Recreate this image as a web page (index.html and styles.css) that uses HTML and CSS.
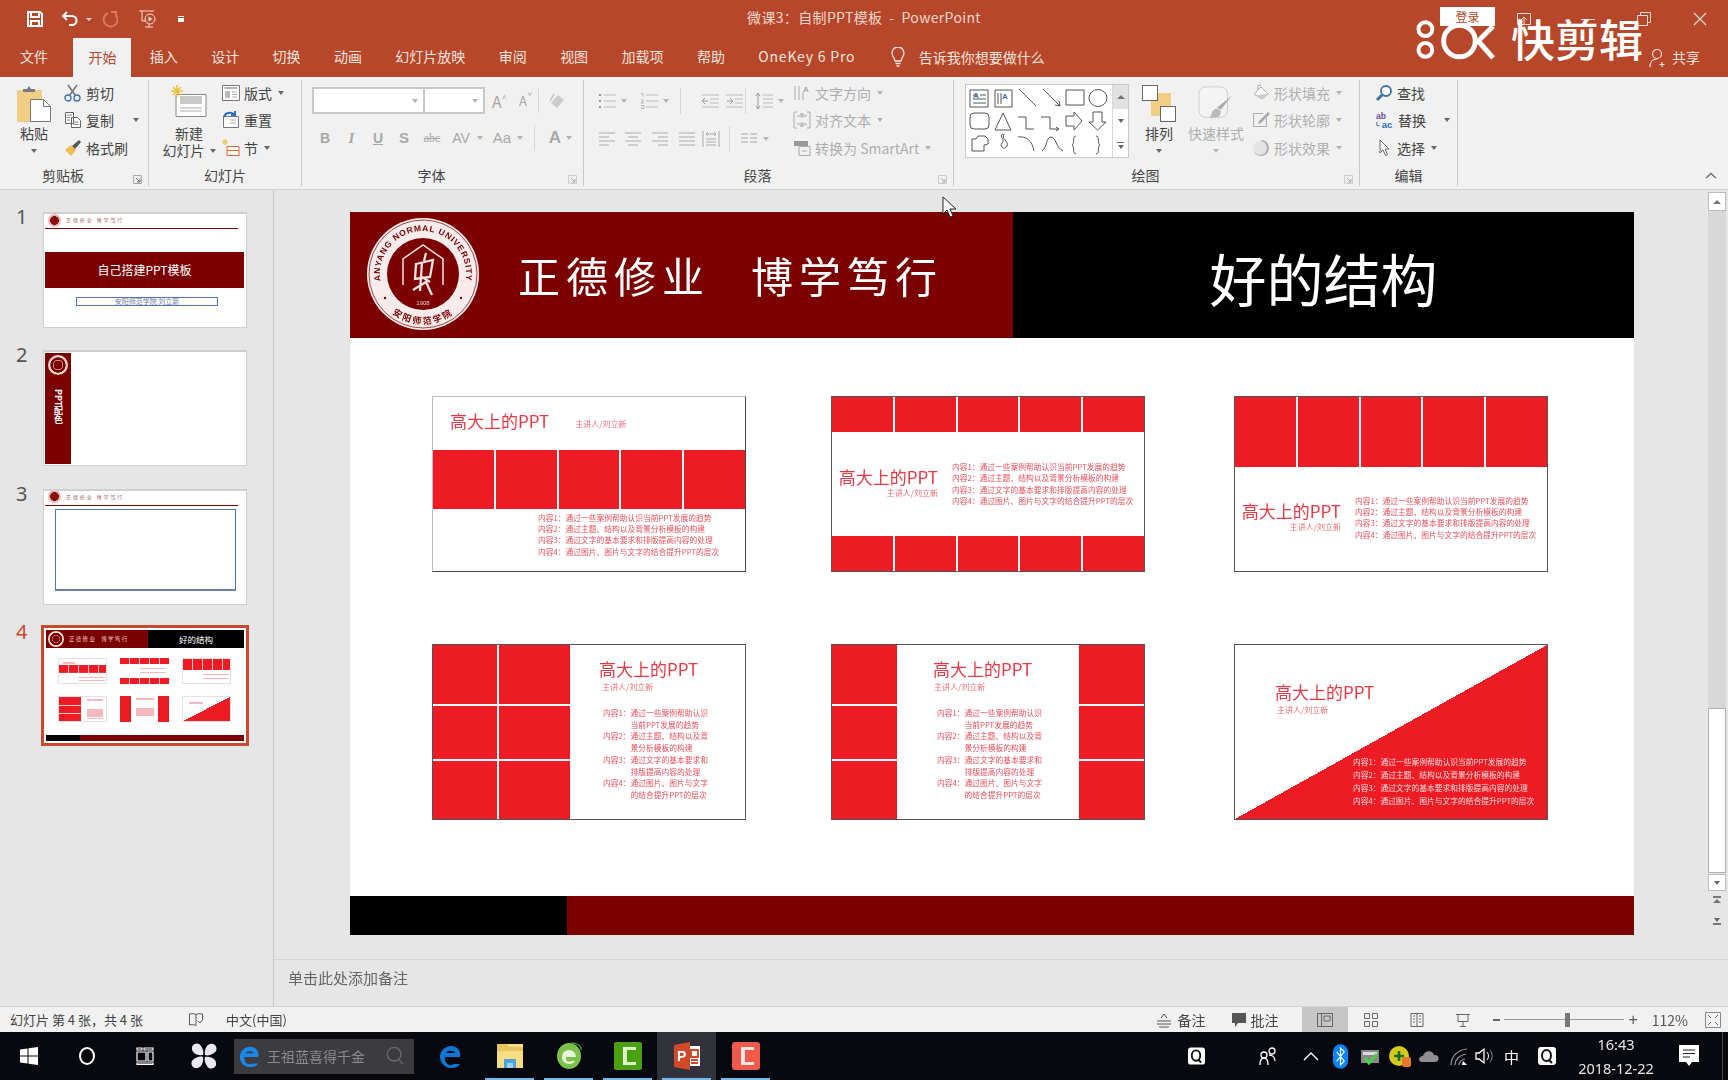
FILE: index.html
```html
<!DOCTYPE html>
<html lang="zh-CN">
<head>
<meta charset="utf-8">
<title>微课3：自制PPT模板 - PowerPoint</title>
<link rel="stylesheet" href="styles.css">
</head>
<body>
<div class="app">

<header class="titlebar">
  <div class="qat">
    <svg class="qi qsave" viewBox="0 0 18 18"><path d="M2 2h12l2 2v12H2z M5 2v5h8V2 M5 16v-5h8v5" fill="none" stroke="#fff" stroke-width="2"/></svg>
    <svg class="qi" viewBox="0 0 18 18"><path d="M6 2L2 6l4 4M2.500 6H11a4.500 4.500 0 0 1 0 9H8" fill="none" stroke="#fff" stroke-width="2"/></svg>
    <span class="qcaret"></span>
    <svg class="qi qdim" viewBox="0 0 18 18"><path d="M11 2h5v5M15 4a7 7 0 1 1-7-1" fill="none" stroke="#d9795e" stroke-width="2"/></svg>
    <svg class="qi qwide" viewBox="0 0 20 20"><path d="M1 2h15M4 2v10h4M7 18h8M11 15v3" fill="none" stroke="#f5ddd5" stroke-width="1"/><circle cx="12" cy="10" r="5" fill="none" stroke="#f5ddd5"/><path d="M10.500 7.500l4 2.500-4 2.500z" fill="#f5ddd5"/></svg>
    <span class="qmore"></span>
  </div>
  <div class="doc-title">微课3：自制PPT模板&nbsp; - &nbsp;PowerPoint</div>
  <div class="winctl">
    <svg class="wi" viewBox="0 0 14 14"><path d="M.5 1.500h13v11H.5zM4 8l3-3 3 3M7 5v7" fill="none" stroke="#f5ddd5"/></svg>
    <span class="wmin"></span>
    <svg class="wi" viewBox="0 0 14 14"><path d="M.5 3.500h10v10H.5zM3.500 3.500v-3h10v10h-3" fill="none" stroke="#f5ddd5"/></svg>
    <svg class="wi" viewBox="0 0 14 14"><path d="M1 1l12 12M13 1L1 13" fill="none" stroke="#f5ddd5" stroke-width="1.200"/></svg>
  </div>
</header>

<nav class="tabs">
  <span class="tab tab-file">文件</span>
  <span class="tab tab-on">开始</span>
  <span class="tab">插入</span>
  <span class="tab">设计</span>
  <span class="tab">切换</span>
  <span class="tab">动画</span>
  <span class="tab">幻灯片放映</span>
  <span class="tab">审阅</span>
  <span class="tab">视图</span>
  <span class="tab">加载项</span>
  <span class="tab">帮助</span>
  <span class="tab tab-latin">OneKey 6 Pro</span>
  <span class="tell">
    <svg class="bulb" viewBox="0 0 16 20"><path d="M5 14c0-3-3-4-3-8a6 6 0 0 1 12 0c0 4-3 5-3 8zM5.500 16.500h5M6.500 19h3" fill="none" stroke="#f6e5df" stroke-width="1.300"/></svg>
    告诉我你想要做什么
  </span>
  <span class="share">
    <svg class="shareic" viewBox="0 0 18 20"><circle cx="8" cy="6" r="4.500" fill="none" stroke="#f6e5df" stroke-width="1.200"/><path d="M1 19c0-5 3-8 7-8M13 14v5M10.500 16.500h5" fill="none" stroke="#f6e5df" stroke-width="1.200"/></svg>
    共享
  </span>
</nav>

<section class="ribbon">
  <div class="group g1">
    <div class="gbody">
      <div class="big paste">
        <svg class="ic-paste" viewBox="0 0 34 37"><rect y="5" width="25" height="32" fill="#f2cd84"/><path d="M6 7V4h4l2-3 2 3h4v3z" fill="#7a7a7a"/><path d="M13.500 14.500h13l7 7v15h-20z" fill="#fff" stroke="#777"/><path d="M26.500 14.500v7h7" fill="none" stroke="#777"/></svg>
        <span class="big-label">粘贴</span>
        <span class="caret caret-big"></span>
      </div>
      <div class="rows rows1">
        <div class="row">
          <svg class="ic" viewBox="0 0 18 18"><circle cx="4" cy="14" r="3" fill="none" stroke="#3d6fa8" stroke-width="1.300"/><circle cx="13" cy="14" r="3" fill="none" stroke="#3d6fa8" stroke-width="1.300"/><path d="M5.500 11.500L13 1M11.500 11.500L4 1" stroke="#777" stroke-width="1.600"/></svg>
          <span>剪切</span>
        </div>
        <div class="row">
          <svg class="ic" viewBox="0 0 18 18"><path d="M1.500 1.500h8v11h-8zM7.500 6.500h6l3 3v7h-9z" fill="#fff" stroke="#666"/><path d="M3 4h5M3 6.500h3M3 9h3M9.500 11h5M9.500 13.500h5" stroke="#888"/></svg>
          <span>复制</span><span class="caret caret-copy"></span>
        </div>
        <div class="row">
          <svg class="ic" viewBox="0 0 18 18"><path d="M1 11l6-5 5 5-5 6z" fill="#eebb55"/><path d="M8 7l7-6 2 2-6 7z" fill="#555"/></svg>
          <span>格式刷</span>
        </div>
      </div>
    </div>
    <div class="glabel launch">剪贴板<svg class="launcher" viewBox="0 0 9 9"><path d="M.5.500h8v8h-8z" fill="none" stroke="#aaa"/><path d="M3 3l4 4M7 4v3H4" fill="none" stroke="#666"/></svg></div>
  </div>

  <div class="group g2">
    <div class="gbody">
      <div class="big newslide">
        <svg class="ic-new" viewBox="0 0 36 32"><path d="M5 9.500h30v22H5z" fill="#fff" stroke="#888"/><rect x="9" y="11" width="22" height="8" fill="#c9c9c9"/><path d="M9 23h22M9 26h22" stroke="#aaa"/><path d="M6 0v12M0 6h12M2 2l8 8M10 2l-8 8" stroke="#f0c040" stroke-width="1.600"/></svg>
        <span class="big-label newlabel">新建</span>
        <span class="big-label">幻灯片<span class="caret caret-inline"></span></span>
      </div>
      <div class="rows rows2">
        <div class="row">
          <svg class="ic" viewBox="0 0 18 18"><path d="M.5 1.500h17v15H.5z" fill="#fff" stroke="#777"/><path d="M2.500 4h13" stroke="#999" stroke-width="1.500"/><rect x="3" y="7" width="5" height="7" fill="#bbb"/><path d="M10 8h5M10 10.500h5M10 13h5" stroke="#aaa"/></svg>
          <span>版式</span><span class="caret"></span>
        </div>
        <div class="row">
          <svg class="ic" viewBox="0 0 18 18"><path d="M1.500 5.500h15v11h-15z" fill="#fff" stroke="#777"/><path d="M8 9h6M8 12h6" stroke="#aaa"/><path d="M2 6a6 5 0 0 1 10-3l1 1M13 0v4H9" fill="none" stroke="#2a6fbf" stroke-width="2"/></svg>
          <span>重置</span>
        </div>
        <div class="row">
          <svg class="ic" viewBox="0 0 18 18"><path d="M5 7.500h12v4H5zM5 11.500h12v5H5z" fill="#fff" stroke="#d46a3a"/><path d="M3 0v6M0 3h6M1 1l4 4M5 1L1 5" stroke="#f0c040"/></svg>
          <span>节</span><span class="caret"></span>
        </div>
      </div>
    </div>
    <div class="glabel">幻灯片</div>
  </div>

  <div class="group g3">
    <div class="gbody col">
      <div class="font-row1">
        <span class="combo combo-font"><span class="caret caret-dim"></span></span>
        <span class="combo combo-size"><span class="caret caret-dim"></span></span>
        <span class="fsym fgrow">A<sup>^</sup></span>
        <span class="fsym fshrink">A<sup>ˇ</sup></span>
        <span class="vsep"></span>
        <svg class="ic eraser" viewBox="0 0 18 18"><path d="M3 11l7-8 6 5-7 8z" fill="#ccc"/><path d="M2 9l4-7" stroke="#bbb" stroke-width="1.500"/></svg>
      </div>
      <div class="font-row2">
        <span class="fb b">B</span><span class="fb i">I</span><span class="fb u">U</span><span class="fb s">S</span>
        <span class="fb abc">abc</span>
        <span class="fb av">AV</span><span class="caret caret-dim"></span>
        <span class="fb aa">Aa</span><span class="caret caret-dim"></span>
        <span class="vsep vsep-a"></span>
        <span class="fb ca">A</span><span class="caret caret-dim"></span>
      </div>
    </div>
    <div class="glabel launch">字体<svg class="launcher" viewBox="0 0 9 9"><path d="M.5.500h8v8h-8z" fill="none" stroke="#ccc"/><path d="M3 3l4 4M7 4v3H4" fill="none" stroke="#aaa"/></svg></div>
  </div>

  <div class="group g4">
    <div class="gbody">
      <div class="para-left">
        <div class="para-row1">
          <svg class="ic" viewBox="0 0 18 18"><path d="M6 3h12M6 9h12M6 15h12" stroke="#bbb"/><path d="M1 3h2M1 9h2M1 15h2" stroke="#999" stroke-width="2"/></svg>
          <span class="caret caret-dim cm"></span>
          <svg class="ic ml13" viewBox="0 0 18 18"><path d="M6 3h12M6 9h12M6 15h12" stroke="#bbb"/><path d="M1 1.500h2v3M1 8h2.500L1 11h3M1 13.500h3v3H1" fill="none" stroke="#aaa" stroke-width=".8"/></svg>
          <span class="caret caret-dim cm"></span>
          <span class="vsep vs1"></span>
          <svg class="ic" viewBox="0 0 18 18"><path d="M1 3h17M9 7h9M9 11h9M1 15h17" stroke="#bbb"/><path d="M7 9H1M4 6L1 9l3 3" fill="none" stroke="#999"/></svg>
          <svg class="ic ml7" viewBox="0 0 18 18"><path d="M0 3h17M9 7h8M9 11h8M0 15h17" stroke="#bbb"/><path d="M1 9h6M4 6l3 3-3 3" fill="none" stroke="#999"/></svg>
          <span class="vsep vs2"></span>
          <svg class="ic" viewBox="0 0 18 18"><path d="M8 3h10M8 7h10M8 11h10M8 15h10" stroke="#bbb"/><path d="M3 1v16M1 4l2-3 2 3M1 14l2 3 2-3" fill="none" stroke="#999"/></svg>
          <span class="caret caret-dim cm"></span>
        </div>
        <div class="para-row2">
          <svg class="ic" viewBox="0 0 18 18"><path d="M1 3h16M1 7h10M1 11h16M1 15h10" stroke="#aaa"/></svg>
          <svg class="ic ml8" viewBox="0 0 18 18"><path d="M1 3h16M4 7h10M1 11h16M4 15h10" stroke="#aaa"/></svg>
          <svg class="ic ml9" viewBox="0 0 18 18"><path d="M1 3h16M7 7h10M1 11h16M7 15h10" stroke="#aaa"/></svg>
          <svg class="ic ml9" viewBox="0 0 18 18"><path d="M1 3h16M1 7h16M1 11h16M1 15h16" stroke="#aaa"/></svg>
          <svg class="ic ml6" viewBox="0 0 18 18"><path d="M1 1v16M17 1v16M4 4h10M6 2L4 4l2 2M12 2l2 2-2 2M4 9h10M4 12h10M4 15h10" fill="none" stroke="#aaa"/></svg>
          <span class="vsep vs3"></span>
          <svg class="ic" viewBox="0 0 18 18"><path d="M1 4h7M10 4h7M1 8h7M10 8h7M1 12h7M10 12h7" stroke="#aaa"/></svg>
          <span class="caret caret-dim cm"></span>
        </div>
      </div>
      <div class="rows rows4 dim">
        <div class="row">
          <svg class="ic" viewBox="0 0 18 18"><path d="M2 2v14M6 2v14M10 8v8" stroke="#aaa"/><text x="10" y="8" class="svgA">A</text></svg>
          <span>文字方向</span><span class="caret caret-dim"></span>
        </div>
        <div class="row">
          <svg class="ic" viewBox="0 0 18 18"><path d="M4 1H1v16h3M14 1h3v16h-3M4 5h10M4 13h10M9 2v5M7 4l2-2 2 2M9 16v-5M7 14l2 2 2-2" fill="none" stroke="#aaa"/></svg>
          <span>对齐文本</span><span class="caret caret-dim"></span>
        </div>
        <div class="row">
          <svg class="ic" viewBox="0 0 18 18"><path d="M1 2h14v5H1z" fill="#999"/><path d="M6 7.500h11v9H6z" fill="#f1f1f1" stroke="#aaa"/><path d="M9 12h5" stroke="#aaa"/></svg>
          <span>转换为 SmartArt</span><span class="caret caret-dim"></span>
        </div>
      </div>
    </div>
    <div class="glabel launch">段落<svg class="launcher" viewBox="0 0 9 9"><path d="M.5.500h8v8h-8z" fill="none" stroke="#ccc"/><path d="M3 3l4 4M7 4v3H4" fill="none" stroke="#aaa"/></svg></div>
  </div>

  <div class="group g5">
    <div class="gbody">
      <div class="gallery">
        <svg class="shapes" viewBox="0 0 146 72">
          <g fill="none" stroke="#555">
            <path d="M4 5h18v17H4zM7 10h5M14 10h6M7 14h13M7 18h13"/>
            <path d="M29 5h17v17H29zM32 8v11M35 8v11"/>
            <path d="M53 4l17 17M77 4l17 17M94 21l-5-1M94 21l-1-5"/>
            <path d="M100 5h18v15h-18z"/><ellipse cx="132" cy="13" rx="9" ry="8.500"/>
            <rect x="4" y="28" width="19" height="16" rx="4"/>
            <path d="M37 28l-8 17h16zM52 32h8v12h8M75 32h9v12h9M93 44l-3-2M93 44l-3 2"/>
            <path d="M100 31h8v-4l8 9-8 9v-4h-8zM127 27h9v10h4l-8.500 8-8.500-8h4z"/>
            <path d="M6 66V54h4l2-3h7l3 3v5l-4 1v6zM37 49c-5 2 3 6-1 9 -3 3 3 8 5 3s-6-7-3-12M52 52c8-1 14 3 16 14M76 66c5-3 4-14 9-14s5 11 12 14M110 51c-4 0-1 8-4 9 3 1 0 9 4 9M130 51c4 0 1 8 4 9-3 1 0 9-4 9"/>
          </g>
          <g fill="#3a6fb0" font-family="Liberation Sans, sans-serif" font-size="8" font-weight="700">
            <text x="7" y="13">A</text><text x="36" y="14">A</text>
          </g>
        </svg>
        <div class="gal-scroll">
          <span class="gs gs-up"><span class="tri-up"></span></span>
          <span class="gs"><span class="caret caret-g"></span></span>
          <span class="gs gs-more"><span class="gmore"></span><span class="caret caret-g"></span></span>
        </div>
      </div>
      <div class="big arrange">
        <svg class="ic-arr" viewBox="0 0 34 37"><rect x="9" y="8" width="20" height="23" fill="#f2cd84"/><rect x=".5" y=".5" width="15" height="15" fill="#fff" stroke="#666"/><rect x="18.500" y="21.500" width="15" height="15" fill="#fff" stroke="#666"/></svg>
        <span class="big-label">排列</span>
        <span class="caret caret-big"></span>
      </div>
      <div class="big quick dim">
        <svg class="ic-arr" viewBox="0 0 38 37"><rect x="1" y="1" width="30" height="32" rx="7" fill="#f4f4f4" stroke="#ccc"/><path d="M36 10L24 25l-4-2z" fill="#aaa"/><path d="M19 24c5 0 6 4 4 7s-8 3-11 2c3-2 2-8 7-9z" fill="#bbb"/></svg>
        <span class="big-label">快速样式</span>
        <span class="caret caret-dim caret-big"></span>
      </div>
      <div class="rows rows5 dim">
        <div class="row">
          <svg class="ic" viewBox="0 0 18 18"><path d="M2 10l7-7 7 7-6 5z" fill="#fff" stroke="#aaa"/><path d="M4 11l6 4 6-5z" fill="#ccc"/><path d="M6 6V2l3-1" fill="none" stroke="#aaa"/></svg>
          <span>形状填充</span><span class="caret caret-dim"></span>
        </div>
        <div class="row">
          <svg class="ic" viewBox="0 0 18 18"><path d="M11 2.500H1.500v13h13V7" fill="none" stroke="#aaa"/><path d="M16 1l2 2-9 9-3 1 1-3z" fill="#aaa"/></svg>
          <span>形状轮廓</span><span class="caret caret-dim"></span>
        </div>
        <div class="row">
          <svg class="ic" viewBox="0 0 18 18"><path d="M9 1a8 8 0 1 1-7 12l8-6z" fill="#aaa"/><circle cx="8" cy="9" r="7" fill="#e3e3e3"/></svg>
          <span>形状效果</span><span class="caret caret-dim"></span>
        </div>
      </div>
    </div>
    <div class="glabel launch">绘图<svg class="launcher" viewBox="0 0 9 9"><path d="M.5.500h8v8h-8z" fill="none" stroke="#ccc"/><path d="M3 3l4 4M7 4v3H4" fill="none" stroke="#aaa"/></svg></div>
  </div>

  <div class="group g6">
    <div class="gbody">
      <div class="rows rows6">
        <div class="row">
          <svg class="ic" viewBox="0 0 18 18"><circle cx="11" cy="7" r="5" fill="#fff" stroke="#3d6fa8" stroke-width="1.800"/><path d="M7 11l-5 5" stroke="#3d6fa8" stroke-width="3"/></svg>
          <span>查找</span>
        </div>
        <div class="row">
          <svg class="ic ic-replace" viewBox="0 0 20 20"><text x="1" y="9" class="svgab">ab</text><text x="7" y="18" class="svgac">ac</text><path d="M2 12v4h3" fill="none" stroke="#3d6fa8"/></svg>
          <span>替换</span><span class="caret caret-rep"></span>
        </div>
        <div class="row">
          <svg class="ic" viewBox="0 0 18 18"><path d="M5 1v13l3-3 2.500 5.500 2-1L10 10h4z" fill="#fff" stroke="#666"/></svg>
          <span>选择</span><span class="caret"></span>
        </div>
      </div>
    </div>
    <div class="glabel">编辑</div>
  </div>

  <svg class="collapse" viewBox="0 0 12 7"><path d="M1 6l5-4.500L11 6" fill="none" stroke="#777" stroke-width="1.600"/></svg>
</section>

<main class="workspace">
  <aside class="thumbs">
    <div class="trow">
      <span class="tnum">1</span>
      <div class="thumb t1">
        <div class="minihead"><span class="seal"></span><span class="minimotto">正德修业 博学笃行</span></div>
        <div class="t1band">自己搭建PPT模板</div>
        <div class="t1box">安阳师范学院 刘立新</div>
      </div>
    </div>
    <div class="trow">
      <span class="tnum">2</span>
      <div class="thumb t2">
        <div class="t2bar"><span class="seal seal-big"></span><span class="t2text">PPT配色</span></div>
      </div>
    </div>
    <div class="trow">
      <span class="tnum">3</span>
      <div class="thumb t3">
        <div class="minihead"><span class="seal"></span><span class="minimotto">正德修业 博学笃行</span></div>
        <div class="t3box"></div>
      </div>
    </div>
    <div class="trow">
      <span class="tnum tnum-on">4</span>
      <div class="thumb t4">
        <div class="t4head">
          <div class="t4left"><span class="seal seal-big"></span><span class="t4motto">正德修业&nbsp; 博学笃行</span></div>
          <div class="t4right">好的结构</div>
        </div>
        <div class="t4grid">
          <span class="m m1"></span><span class="m m2"></span><span class="m m3"></span>
          <span class="m m4"></span><span class="m m5"></span><span class="m m6"></span>
        </div>
        <div class="t4foot"><span class="t4black"></span></div>
      </div>
    </div>
  </aside>

  <div class="editor">
    <div class="stage">
      <div class="canvas">
        <article class="slide">
          <div class="s-head">
            <div class="s-left">
              <svg class="seal-svg" viewBox="0 0 114 114">
                <defs><path id="arcTop" d="M18 75.200A43 43 0 1 1 96 75.200"/><path id="arcBot" d="M16 85.700A50 50 0 0 0 98 85.700"/></defs>
                <circle cx="57" cy="57" r="56" fill="#f6ecec"/>
                <circle cx="57" cy="57" r="54" fill="none" stroke="#8a1a1a" stroke-width=".8"/>
                <circle cx="57" cy="57" r="36" fill="#7b0000"/>
                <text class="seal-txt"><textPath href="#arcTop" startOffset="50%" text-anchor="middle">ANYANG NORMAL UNIVERSITY</textPath></text>
                <text class="seal-cn"><textPath href="#arcBot" startOffset="50%" text-anchor="middle">安阳师范学院</textPath></text>
                <circle cx="19" cy="81" r="1.200" fill="#7b0000"/><circle cx="95" cy="81" r="1.200" fill="#7b0000"/>
                <path d="M37 68V42l20-14 20 14v26" fill="none" stroke="#f4e4e4" stroke-width="1.500"/>
                <path d="M60 36l-2 8M50 47l17-4-3 17-15 2zM56 45l-2 29M47 73l13-8 6 13M56 60l8 5" fill="none" stroke="#f4e4e4" stroke-width="2.300"/>
                <text x="57" y="88" class="seal-yr">1908</text>
              </svg>
              <div class="motto"><span>正德修业</span><span>博学笃行</span></div>
            </div>
            <div class="s-right">好的结构</div>
          </div>

          <div class="s-body">
            <div class="card c1">
              <div class="c1-top"><span class="ct">高大上的PPT</span><span class="cs">主讲人/刘立新</span></div>
              <div class="band c1-band"><i></i><i></i><i></i><i></i><i></i></div>
              <div class="list c1-list">
                <p>内容1：通过一些案例帮助认识当前PPT发展的趋势</p>
                <p>内容2：通过主题、结构以及背景分析模板的构建</p>
                <p>内容3：通过文字的基本要求和排版提高内容的处理</p>
                <p>内容4：通过图片、图片与文字的结合提升PPT的层次</p>
              </div>
            </div>

            <div class="card c2">
              <div class="band c2-band"><i></i><i></i><i></i><i></i><i></i></div>
              <div class="c2-mid">
                <div class="tblock"><span class="ct">高大上的PPT</span><span class="cs">主讲人/刘立新</span></div>
                <div class="list">
                  <p>内容1：通过一些案例帮助认识当前PPT发展的趋势</p>
                  <p>内容2：通过主题、结构以及背景分析模板的构建</p>
                  <p>内容3：通过文字的基本要求和排版提高内容的处理</p>
                  <p>内容4：通过图片、图片与文字的结合提升PPT的层次</p>
                </div>
              </div>
              <div class="band c2-band"><i></i><i></i><i></i><i></i><i></i></div>
            </div>

            <div class="card c3">
              <div class="band c3-band"><i></i><i></i><i></i><i></i><i></i></div>
              <div class="c3-mid">
                <div class="tblock"><span class="ct">高大上的PPT</span><span class="cs">主讲人/刘立新</span></div>
                <div class="list">
                  <p>内容1：通过一些案例帮助认识当前PPT发展的趋势</p>
                  <p>内容2：通过主题、结构以及背景分析模板的构建</p>
                  <p>内容3：通过文字的基本要求和排版提高内容的处理</p>
                  <p>内容4：通过图片、图片与文字的结合提升PPT的层次</p>
                </div>
              </div>
            </div>

            <div class="card c4">
              <div class="blocks blocks-2"><i></i><i></i><i></i><i></i><i></i><i></i></div>
              <div class="col-text c4-text">
                <span class="ct">高大上的PPT</span><span class="cs cs-gap">主讲人/刘立新</span>
                <dl class="dlist">
                  <dt>内容1：</dt><dd>通过一些案例帮助认识当前PPT发展的趋势</dd>
                  <dt>内容2：</dt><dd>通过主题、结构以及背景分析模板的构建</dd>
                  <dt>内容3：</dt><dd>通过文字的基本要求和排版提高内容的处理</dd>
                  <dt>内容4：</dt><dd>通过图片、图片与文字的结合提升PPT的层次</dd>
                </dl>
              </div>
            </div>

            <div class="card c5">
              <div class="blocks blocks-1"><i></i><i></i><i></i></div>
              <div class="col-text c5-text">
                <span class="ct">高大上的PPT</span><span class="cs cs-gap">主讲人/刘立新</span>
                <dl class="dlist">
                  <dt>内容1：</dt><dd>通过一些案例帮助认识当前PPT发展的趋势</dd>
                  <dt>内容2：</dt><dd>通过主题、结构以及背景分析模板的构建</dd>
                  <dt>内容3：</dt><dd>通过文字的基本要求和排版提高内容的处理</dd>
                  <dt>内容4：</dt><dd>通过图片、图片与文字的结合提升PPT的层次</dd>
                </dl>
              </div>
              <div class="blocks blocks-1"><i></i><i></i><i></i></div>
            </div>

            <div class="card c6">
              <div class="c6-title"><span class="ct">高大上的PPT</span><span class="cs">主讲人/刘立新</span></div>
              <div class="list c6-list">
                <p>内容1：通过一些案例帮助认识当前PPT发展的趋势</p>
                <p>内容2：通过主题、结构以及背景分析模板的构建</p>
                <p>内容3：通过文字的基本要求和排版提高内容的处理</p>
                <p>内容4：通过图片、图片与文字的结合提升PPT的层次</p>
              </div>
            </div>
          </div>

          <div class="s-foot"><span class="s-foot-black"></span></div>
        </article>
      </div>
      <div class="vscroll">
        <span class="vbtn"><span class="tri-up"></span></span>
        <span class="vtrack"></span>
        <span class="vthumb"></span>
        <span class="vbtn vbtn-down"><span class="caret caret-g"></span></span>
        <span class="vjump"><span class="bar"></span><span class="tri-up"></span></span>
        <span class="vjump vjump2"><span class="caret caret-g"></span><span class="bar"></span></span>
      </div>
    </div>
    <div class="notes">单击此处添加备注</div>
  </div>
  <svg class="cursor" viewBox="0 0 16 23"><path d="M1 1v17l4-4 3 7 3-1-3-7h6z" fill="#fff" stroke="#222"/></svg>
</main>

<footer class="status">
  <span class="st-count">幻灯片 第 4 张，共 4 张</span>
  <svg class="st-book" viewBox="0 0 16 16"><path d="M8 2.500C6 1.500 3 1.500 1.500 2v11c2-.5 4.500-.5 6.500.5M8 2.500c2-1 4-1 6.500-.5v5M8 2.500v11M10 9l2 2 3-4" fill="none" stroke="#555"/></svg>
  <span class="st-lang">中文(中国)</span>
  <span class="st-right">
    <svg class="st-ic" viewBox="0 0 16 16"><path d="M1 9h14M1 12h14M3 15h10M5 6l3-4 3 4" fill="none" stroke="#555"/></svg>
    <span class="st-note">备注</span>
    <svg class="st-ic st-cm" viewBox="0 0 16 16"><path d="M1 1h14v10H7l-3 4v-4H1z" fill="#555"/></svg>
    <span class="st-comment">批注</span>
    <span class="view view-on"><svg class="st-ic" viewBox="0 0 16 16"><path d="M.5 1.500h15v13H.5zM4.500 1.500v13M7 4h6v5H7z" fill="none" stroke="#666"/></svg></span>
    <span class="view"><svg class="st-ic" viewBox="0 0 16 16"><path d="M1.500 1.500h5v5h-5zM9.500 1.500h5v5h-5zM1.500 9.500h5v5h-5zM9.500 9.500h5v5h-5z" fill="none" stroke="#666"/></svg></span>
    <span class="view"><svg class="st-ic" viewBox="0 0 16 16"><path d="M2 1.500h12v13H2zM8 1.500v13M4 4h2M4 7h2M4 10h2M10 4h2M10 7h2M10 10h2" fill="none" stroke="#666"/></svg></span>
    <span class="view"><svg class="st-ic" viewBox="0 0 16 16"><path d="M1 2.500h14M3 2.500v7h10v-7M8 9.500V14M5 14.500h6" fill="none" stroke="#666"/></svg></span>
    <span class="zoom-minus"></span>
    <span class="slider"><span class="slider-knob"></span></span>
    <span class="zoom-plus">+</span>
    <span class="zoom-pct">112%</span>
    <svg class="st-ic st-fit" viewBox="0 0 16 16"><path d="M.5.500h15v15H.5z" fill="none" stroke="#888"/><path d="M3 3l3 3M13 3l-3 3M3 13l3-3M13 13l-3-3" stroke="#666"/></svg>
  </span>
</footer>

<footer class="taskbar">
  <span class="tslot">
    <svg class="tk" viewBox="0 0 20 20"><path d="M1 3.500l7.500-1v7H1zM9.500 2.300L19 1v8.500H9.500zM1 10.500h7.500v7l-7.500-1zM9.500 10.500H19V19l-9.500-1.300z" fill="#fff"/></svg>
  </span>
  <span class="tslot">
    <svg class="tk" viewBox="0 0 20 20"><ellipse cx="10" cy="10" rx="7" ry="8" fill="none" stroke="#fff" stroke-width="2"/></svg>
  </span>
  <span class="tslot">
    <svg class="tk" viewBox="0 0 20 20"><path d="M2 2h5v2H2zM9 2h9v2H9zM2 6h9v9H2zM13 6h5v9h-5zM2 17h16v1.500H2z" fill="none" stroke="#fff" stroke-width="1.200"/></svg>
  </span>
  <span class="tslot tslot-fan">
    <svg class="tk tk-lg" viewBox="0 0 28 28"><path d="M13 13C6 14 1 10 2 5c1-4 7-5 9-1 2 3 3 6 2 9zM15 13C14 6 18 1 23 2c4 1 5 7 1 9-3 2-6 3-9 2zM15 15c7-1 12 3 11 8-1 4-7 5-9 1-2-3-3-6-2-9zM13 15c1 7-3 12-8 11-4-1-5-7-1-9 3-2 6-3 9-2z" fill="#e8e8ee"/></svg>
  </span>
  <span class="tsearch">
    <svg class="tk tk-e" viewBox="0 0 26 28"><path d="M4 15h18c1-7-3-11-9-11S2 9 2 15s5 11 11 11c4 0 7-1 9-4h-6c-3 2-8 1-9-4V15z M8 11c1-3 9-3 9 0z" fill="#1b87e6" fill-rule="evenodd"/></svg>
    <span class="tsearch-text">王祖蓝喜得千金</span>
    <svg class="tk tk-mag" viewBox="0 0 22 22"><circle cx="10" cy="9" r="7.500" fill="none" stroke="#6a6a6e" stroke-width="1.500"/><path d="M15 15l5 5" stroke="#6a6a6e" stroke-width="1.500"/></svg>
  </span>
  <span class="tslot tslot-app tsa1">
    <svg class="tk tk-app" viewBox="0 0 26 28"><path d="M4 15h18c1-7-3-11-9-11S2 9 2 15s5 11 11 11c4 0 7-1 9-4h-6c-3 2-8 1-9-4V15z M8 11c1-3 9-3 9 0z" fill="#0b78d8" fill-rule="evenodd"/></svg>
  </span>
  <span class="tslot tslot-app">
    <svg class="tk tk-app" viewBox="0 0 28 28"><path d="M1 2h26v24H1z" fill="#f6dc82"/><path d="M1 2h10l2 3h14v4H1z" fill="#e8c45a"/><path d="M8 26v-9h12v9h-3v-5h-6v5z" fill="#4aa3df"/><rect x="11" y="21" width="6" height="5" fill="#9bd0f0"/></svg>
  </span>
  <span class="tslot tslot-app">
    <svg class="tk tk-app" viewBox="0 0 28 28"><ellipse cx="14" cy="14" rx="12" ry="13" fill="#7cc04a"/><path d="M7 15h14c0-4-3-7-7-7s-7 3-7 7 3 7 7 7c3 0 5-1 6-3h-3c-2 1-5 1-6-1v-3z" fill="#e8f6da"/><path d="M16 1c6 0 11 3 10 7" fill="none" stroke="#3f9030" stroke-width="1.500"/></svg>
  </span>
  <span class="tslot tslot-app">
    <svg class="tk tk-app" viewBox="0 0 28 28"><rect width="28" height="28" rx="2" fill="#4aa010"/><path d="M22 5H9v18h13v-3H13V8h9z" fill="#dff5c8"/></svg>
  </span>
  <span class="tslot tslot-app tslot-on">
    <svg class="tk tk-app" viewBox="0 0 28 28"><path d="M1 3l16-3v28L1 25z" fill="#d1492a"/><path d="M17 4h10v20H17z" fill="#fff"/><path d="M18 8h7v7h-7zM18 18h7M18 21h7" fill="none" stroke="#d1492a" stroke-width="2"/><text x="4" y="19" class="svgP">P</text></svg>
  </span>
  <span class="tslot tslot-app">
    <svg class="tk tk-app" viewBox="0 0 28 28"><rect width="28" height="28" rx="3" fill="#f05a4a"/><path d="M22 5H9v18h13v-3H13V8h9z" fill="#ffe6e0"/></svg>
  </span>
  <span class="ubars"><i></i><i></i><i></i><i></i><i></i></span>

  <span class="tray">
    <svg class="tr tr-q" viewBox="0 0 18 18"><rect width="18" height="18" rx="3" fill="#fff"/><ellipse cx="8.500" cy="8.500" rx="4.500" ry="5.500" fill="none" stroke="#111" stroke-width="2"/><path d="M11 13l3 3" stroke="#111" stroke-width="2"/></svg>
    <svg class="tr tr-people" viewBox="0 0 20 20"><circle cx="14" cy="5" r="3" fill="none" stroke="#fff" stroke-width="1.300"/><circle cx="6" cy="9" r="3" fill="none" stroke="#fff" stroke-width="1.300"/><path d="M2 19c0-5 2-7 4-7s4 2 4 7M11 9c3 0 6 2 6 6" fill="none" stroke="#fff" stroke-width="1.300"/></svg>
    <svg class="tr tr-chev" viewBox="0 0 16 10"><path d="M1 9l7-7 7 7" fill="none" stroke="#fff" stroke-width="1.400"/></svg>
    <svg class="tr tr-bt" viewBox="0 0 16 26"><rect width="16" height="26" rx="8" fill="#0a84ff"/><path d="M4 8l8 10-4 4V4l4 4-8 10" fill="none" stroke="#fff" stroke-width="1.200"/></svg>
    <svg class="tr tr-print" viewBox="0 0 22 22"><path d="M2 5h18v13H2z" fill="#8a8a8a"/><path d="M4 7h14v3H4z" fill="#ddd"/><path d="M6 13l4 5 8-9" fill="none" stroke="#4bd04b" stroke-width="3"/></svg>
    <svg class="tr tr-plus" viewBox="0 0 22 22"><circle cx="10" cy="11" r="10" fill="#d6c91c"/><path d="M10 6v10M5 11h10" stroke="#16701a" stroke-width="2.600"/><rect x="13" y="12" width="9" height="10" rx="2" fill="#e8792a"/></svg>
    <svg class="tr tr-cloud" viewBox="0 0 22 14"><path d="M4 13c-4 0-4-6 1-6 1-5 9-7 11-1 6-1 6 7 1 7z" fill="#8f8f8f"/></svg>
    <svg class="tr tr-wifi" viewBox="0 0 20 20"><path d="M2 19C2 11 8 4 18 3M6 19c0-5 4-10 11-11M10 19c0-3 2-5 6-6" fill="none" stroke="#999" stroke-width="1.200"/><path d="M14 15l4 4h-5z" fill="#fff"/></svg>
    <svg class="tr tr-vol" viewBox="0 0 20 20"><path d="M1 7h3l5-4v14l-5-4H1z" fill="none" stroke="#fff" stroke-width="1.300"/><path d="M12 6c2 3 2 5 0 8" fill="none" stroke="#fff"/><path d="M15 4c3 4 3 8 0 12" fill="none" stroke="#888"/></svg>
    <span class="tr-ime">中</span>
    <svg class="tr tr-q2" viewBox="0 0 18 18"><rect width="18" height="18" rx="3" fill="#fff"/><ellipse cx="8.500" cy="8.500" rx="4.500" ry="5.500" fill="none" stroke="#111" stroke-width="2"/><path d="M11 13l3 3" stroke="#111" stroke-width="2"/></svg>
    <span class="clock"><span>16:43</span><span>2018-12-22</span></span>
    <svg class="tr tr-note" viewBox="0 0 20 22"><path d="M0 0h20v17h-7l-3 4-3-4H0z" fill="#fff"/><path d="M4 5h12M4 8.500h12M4 12h7" stroke="#222"/></svg>
    <span class="desk"></span>
  </span>
</footer>

<div class="watermark">
  <svg class="wm-logo" viewBox="0 0 80 40">
    <g fill="none" stroke="#fff">
      <circle cx="9.500" cy="9" r="7" stroke-width="4"/>
      <circle cx="9.500" cy="30" r="7" stroke-width="4"/>
      <circle cx="44" cy="21" r="16" stroke-width="5"/>
      <path d="M78 6L63 21l15 17" stroke-width="5"/>
    </g>
  </svg>
  <span class="wm-text">快剪辑</span>
  <span class="login">登录</span>
</div>

</div>
</body>
</html>
```
FILE: styles.css
```css
* { box-sizing: border-box; }
html, body { margin: 0; height: 100%; overflow: hidden; }
body {
  font-family: "Noto Sans CJK SC", "Noto Sans", sans-serif;
  font-size: 14px;
  color: #444;
  background: #e6e6e6;
}
.app { position: relative; width: 1728px; height: 1080px; display: flex; flex-direction: column; filter: blur(.3px); }
svg { display: block; flex: none; }

/* title bar */
.titlebar {
  height: 38px; background: #b7472a; flex: none;
  display: grid; grid-template-columns: 1fr auto 1fr; align-items: center;
}
.qat { display: flex; align-items: center; padding-left: 26px; }
.qi { width: 18px; height: 18px; margin-right: 7px; }
.qsave { margin-right: 17px; }
.qcaret { width: 0; height: 0; border: 3px solid transparent; border-top: 3px solid #f5ddd5; margin: 3px 0 0 0; }
.qdim { margin-left: 8px; margin-right: 20px; }
.qwide { width: 20px; height: 20px; margin-right: 20px; }
.qmore { width: 6px; height: 6px; border-top: 1px solid #fff; border-bottom: 4px solid #fff; }
.doc-title { font-size: 14px; line-height: 18px; color: #f4d8cf; padding-bottom: 5px; letter-spacing: .35px; }
.winctl { display: flex; align-items: flex-start; justify-content: flex-end; height: 38px; padding: 12px 21px 0 0; gap: 0; }
.wi { width: 14px; height: 14px; margin-left: 42px; }
.wi:first-child { margin-left: 0; }
.wmin { width: 14px; height: 1px; background: #f5ddd5; margin: 7px 0 0 50px; }

/* tabs */
.tabs {
  height: 39px; background: #b7472a; flex: none;
  display: flex; align-items: stretch; gap: 3.400px; padding-left: 5px; position: relative;
}
.tab {
  padding: 0 15px; line-height: 37px; color: #f6e5df; font-size: 14px; white-space: nowrap;
}
.tab-file { margin-right: 7px; }
.tab-on { background: #f1f1f1; color: #b7472a; line-height: 39px; }
.tab-latin { letter-spacing: .8px; }
.tell { display: flex; align-items: center; color: #f6e5df; margin-left: 16px; gap: 13px; font-size: 14px; height: 37px; }
.bulb { width: 16px; height: 20px; }
.share { margin-left: auto; display: flex; align-items: center; height: 37px; color: #f6e5df; font-size: 14px; gap: 5px; padding: 0 28px 0 0; }
.shareic { width: 18px; height: 20px; margin-top: 3px; }

/* ribbon */
.ribbon {
  height: 113px; flex: none; background: #f1f1f1; display: flex; align-items: flex-start;
  padding-top: 3px; border-bottom: 1px solid #d4d4d4; position: relative;
}
.group { height: 106px; border-right: 1px solid #c8c8c8; display: flex; flex-direction: column; flex: none; }
.g1 { width: 149px; } .g2 { width: 153px; } .g3 { width: 282px; }
.g4 { width: 370px; } .g5 { width: 406px; } .g6 { width: 98px; }
.gbody { height: 85px; display: flex; align-items: flex-start; flex: none; }
.gbody.col { flex-direction: column; }
.glabel { position: relative; height: 21px; text-align: center; font-size: 14px; line-height: 21px; color: #444; }
.launch { padding-right: 22px; }
.launcher { position: absolute; right: 6px; bottom: 2px; width: 9px; height: 9px; }

.big { display: flex; flex-direction: column; align-items: center; flex: none; padding-top: 5px; }
.big-label { font-size: 14px; line-height: 17px; margin-top: 3px; white-space: nowrap; display: flex; align-items: center; }
.paste { width: 36px; margin-left: 16px; }
.ic-paste { width: 34px; height: 37px; }
.newslide { width: 54px; margin-left: 13px; }
.ic-new { width: 36px; height: 32px; }
.newslide .big-label { margin-top: 0; }
.newslide .newlabel { margin-top: 8px; }
.arrange { width: 50px; margin-left: 5px; }
.quick { width: 60px; margin-left: 2px; }
.ic-arr { width: 36px; height: 37px; }
.rows { display: flex; flex-direction: column; flex: none; margin-top: -1px; }
.row { height: 27.5px; display: flex; align-items: center; gap: 4px; font-size: 14px; white-space: nowrap; }
.ic { width: 18px; height: 18px; }
.rows1 { margin-left: 12px; }
.rows2 { margin-left: 6px; }
.rows4 { margin-left: 9px; }
.rows5 { margin-left: 6px; }
.rows6 { margin-left: 15px; }
.dim { color: #aeaeae; }

.caret { display: inline-block; width: 0; height: 0; border: 3px solid transparent; border-top: 4px solid #666; border-bottom: 0; flex: none; margin-left: 2px; }
.caret-dim { border-top-color: #b4b4b4; }
.caret-big { margin: 7px 0 0; }
.caret-inline { margin-left: 5px; }
.caret-copy { margin-left: 15px; }
.caret-rep { margin-left: 14px; }
.caret-g { margin: 0; border-top-color: #666; }

.font-row1 { display: flex; align-items: center; height: 27px; margin: 7px 0 0 10px; }
.combo { height: 27px; background: #fff; border: 2px solid #c8c8c8; display: flex; align-items: center; justify-content: flex-end; padding-right: 5px; }
.combo-font { width: 113px; }
.combo-size { width: 60px; margin-left: 0; border-left-width: 0; }
.fsym { color: #a8a8a8; line-height: 20px; display: block; }
.fsym sup { font-size: 9px; line-height: 0; vertical-align: 6px; }
.fgrow { font-size: 16px; margin-left: 7px; width: 24px; }
.fshrink { font-size: 13px; margin-left: 3px; width: 16px; }
.vsep { width: 1px; background: #d6d6d6; flex: none; height: 24px; }
.font-row1 .vsep { margin-left: 3px; }
.eraser { margin-left: 9px; }
.font-row2 { display: flex; align-items: center; height: 27px; margin: 10px 0 0 10px; }
.fb { color: #a8a8a8; font-family: "Liberation Sans", sans-serif; text-align: center; display: block; line-height: 20px; flex: none; }
.b { width: 26px; font-weight: 700; font-size: 14px; }
.i { width: 27px; font-style: italic; font-family: "Liberation Serif", serif; font-weight: 700; font-size: 15px; }
.u { width: 26px; text-decoration: underline; font-weight: 700; font-size: 14px; }
.s { width: 26px; font-weight: 700; font-size: 15px; }
.abc { width: 30px; font-size: 12px; text-decoration: line-through; font-family: "Liberation Serif", serif; }
.av { width: 28px; font-size: 14px; }
.aa { width: 26px; font-size: 15px; margin-left: 6px; }
.vsep-a { margin-left: 11px; height: 26px; }
.ca { width: 18px; font-size: 17px; font-weight: 700; margin-left: 11px; }

.para-left { width: 200px; flex: none; }
.para-row1 { display: flex; align-items: center; height: 28px; padding-left: 14px; margin-top: 7px; }
.para-row2 { display: flex; align-items: center; height: 28px; padding-left: 14px; margin-top: 10px; }
.para-row1 .vsep, .para-row2 .vsep { height: 26px; }
.cm { margin-left: 5px; }
.ml13 { margin-left: 13px; } .ml7 { margin-left: 7px; } .ml8 { margin-left: 8px; } .ml9 { margin-left: 9px; } .ml6 { margin-left: 6px; }
.vs1 { margin: 0 20px 0 11px; }
.vs2 { margin: 0 9px 0 1px; }
.vs3 { margin: 0 10px 0 9px; }
.svgA { font: 700 8px "Liberation Sans", sans-serif; fill: #aaa; }

.gallery { width: 164px; height: 74px; margin: 4px 0 0 11px; border: 1px solid #c8c8c8; background: #fff; display: flex; flex: none; }
.shapes { width: 146px; height: 72px; }
.gal-scroll { flex: 1; display: flex; flex-direction: column; border-left: 1px solid #d8d8d8; }
.gs { flex: 1; display: flex; flex-direction: column; align-items: center; justify-content: center; gap: 2px; }
.gs-up { background: #e2e2e2; }
.gmore { width: 7px; height: 1px; background: #666; }
.tri-up { width: 0; height: 0; border: 4px solid transparent; border-bottom: 4px solid #777; border-top: 0; display: block; }

.ic-replace { width: 19px; height: 20px; }
.svgab { font: 700 9px "Liberation Sans", sans-serif; fill: #6a4fa0; }
.svgac { font: 700 10px "Liberation Sans", sans-serif; fill: #2a6fb8; }
.collapse { width: 12px; height: 7px; margin: 92px 0 0 247px; }

/* workspace */
.workspace { flex: 1; min-height: 0; display: flex; position: relative; background: #e6e6e6; }
.thumbs { width: 273px; flex: none; padding-top: 22px; }
.trow { height: 138.3px; display: flex; align-items: flex-start; }
.tnum { width: 43px; padding-left: 16px; font: 20px/14px "Noto Sans", sans-serif; color: #555; margin-top: -2px; flex: none; padding-top: 0; }
.tnum-on { color: #c8492c; }
.thumb { width: 204px; height: 116px; background: #fff; border: 1px solid #cfcfcf; border-top: 2px solid #cfcfcf; overflow: hidden; display: flex; flex-direction: column; }

.minihead { height: 15px; margin: 0 8px 0 1px; border-bottom: 1px solid #7b0000; display: flex; align-items: center; padding: 0 0 2px 3px; gap: 5px; flex: none; }
.seal { width: 13px; height: 13px; border-radius: 50%; background: radial-gradient(circle, #8a1010 0 45%, #e9b9b9 50% 70%, #a64444 75%); flex: none; }
.minimotto { font-size: 5px; line-height: 8px; color: #a85a5a; letter-spacing: 1.900px; white-space: nowrap; }
.t1band { margin: 23px 2px 0 1px; height: 36px; background: #7b0000; color: #fff; font-size: 12px; line-height: 36px; text-align: center; flex: none; }
.t1box { margin: 9px 0 0 32px; width: 142px; height: 9px; border: 1px solid #4a78b8; font-size: 7px; line-height: 7px; color: #7878a0; text-align: center; white-space: nowrap; flex: none; }
.t2 { flex-direction: row; padding: 1px 0 1px 1px; }
.t2bar { width: 26px; background: #7b0000; display: flex; flex-direction: column; align-items: center; padding-top: 2px; }
.seal-big { width: 20px; height: 20px; background: radial-gradient(circle, #7b0000 0 30%, #c88a8a 32% 36%, #7b0000 38% 52%, #f0d8d0 56% 100%); }
.t2text { writing-mode: vertical-rl; color: #fff; font-size: 9px; line-height: 12px; font-weight: 700; margin-top: 14px; }
.t3box { width: 181px; height: 82px; margin: 3px 0 0 11px; border: 1px solid #4a78b8; border-bottom: 2px solid #6a82a8; flex: none; }
.t4 { width: 202px; height: 115px; margin: 1px 0 0 1px; outline: 3px solid #c8492c; outline-offset: 0; border: 1px solid #fff; padding: 1px; }
.t4head { height: 18px; display: flex; flex: none; }
.t4left { width: 102px; background: #7b0000; display: flex; align-items: center; padding-left: 2px; gap: 5px; }
.t4left .seal-big { width: 16px; height: 16px; }
.t4motto { font-size: 5.500px; line-height: 8px; color: #f0d0d0; white-space: nowrap; letter-spacing: 1.300px; }
.t4right { flex: 1; background: #000; color: #fff; font-size: 8.500px; line-height: 18px; text-align: center; }
.t4grid { flex: 1; display: grid; grid-template-columns: 49px 49px 49px; grid-auto-rows: 26px; column-gap: 13px; row-gap: 12px; padding: 10px 0 0 12px; }
.m { display: block; border: 1px solid #e2e2e2; background-color: #fff; }
.m1 { background-image:
    linear-gradient(#f6b8bc, #f6b8bc), linear-gradient(#f6b8bc, #f6b8bc), linear-gradient(#f6b8bc, #f6b8bc),
    repeating-linear-gradient(to right, #ed1c24 0 9px, #f8c8cc 9px 10px);
  background-size: 26px 1px, 26px 1px, 12px 2px, 100% 33%;
  background-position: 20px 18px, 20px 21px, 4px 3px, 0 40%;
  background-repeat: no-repeat; }
.m2 { background-image:
    linear-gradient(#f6b8bc, #f6b8bc), linear-gradient(#f6b8bc, #f6b8bc),
    repeating-linear-gradient(to right, #ed1c24 0 9px, #f8c8cc 9px 10px),
    repeating-linear-gradient(to right, #ed1c24 0 9px, #f8c8cc 9px 10px);
  background-size: 26px 1px, 26px 1px, 100% 6px, 100% 6px;
  background-position: 20px 10px, 20px 14px, 0 0, 0 100%;
  background-repeat: no-repeat; border: 0; }
.m3 { background-image:
    linear-gradient(#f6b8bc, #f6b8bc), linear-gradient(#f6b8bc, #f6b8bc),
    repeating-linear-gradient(to right, #ed1c24 0 9px, #f8c8cc 9px 10px);
  background-size: 26px 1px, 26px 1px, 100% 11px;
  background-position: 20px 15px, 20px 19px, 0 0;
  background-repeat: no-repeat; }
.m4 { background-image:
    linear-gradient(#f6b8bc, #f6b8bc), linear-gradient(#f6b8bc, #f6b8bc), linear-gradient(#f6b8bc, #f6b8bc),
    linear-gradient(#f8c8cc, #f8c8cc), linear-gradient(#f8c8cc, #f8c8cc),
    linear-gradient(to right, #ed1c24 46%, #fff 46%);
  background-size: 16px 2px, 16px 8px, 16px 1px, 22px 1px, 22px 1px, 100% 100%;
  background-position: 28px 2px, 28px 12px, 28px 21px, 0 8px, 0 16px, 0 0;
  background-repeat: no-repeat; }
.m5 { background-image:
    linear-gradient(#f6b8bc, #f6b8bc), linear-gradient(#f6b8bc, #f6b8bc),
    linear-gradient(to right, #ed1c24 22%, #fff 22% 78%, #ed1c24 78%);
  background-size: 18px 2px, 18px 8px, 100% 100%;
  background-position: 16px 2px, 16px 12px, 0 0;
  background-repeat: no-repeat; border: 0; }
.m6 { background-image:
    linear-gradient(#f6b8bc, #f6b8bc), linear-gradient(to bottom right, #fff 50%, #ed1c24 50%);
  background-size: 14px 2px, 100% 100%;
  background-position: 6px 5px, 0 0;
  background-repeat: no-repeat; }
.t4foot { height: 6px; background: #7b0000; flex: none; }
.t4black { display: block; width: 34px; height: 6px; background: #000; }

.editor { flex: 1; min-width: 0; display: flex; flex-direction: column; border-left: 1px solid #c8c8c8; }
.stage { flex: 1; min-height: 0; display: flex; }
.canvas { flex: 1; padding: 22px 0 0 76px; }
.slide { width: 1284px; height: 723px; background: #fff; display: flex; flex-direction: column; }
.s-head { height: 126px; display: flex; flex: none; }
.s-left { width: 663px; background: #7b0000; display: flex; align-items: center; padding-left: 16px; }
.seal-svg { width: 114px; height: 114px; margin-top: -2px; }
.seal-txt { font: 700 8.500px "Liberation Sans", sans-serif; fill: #7b0000; letter-spacing: .8px; }
.seal-cn { font-size: 9px; fill: #7b0000; letter-spacing: 2px; font-weight: 700; }
.seal-yr { font: 6px "Liberation Sans", sans-serif; fill: #e8c8c8; text-anchor: middle; }
.motto { display: flex; gap: 41px; margin-left: 38px; color: #fff; font-size: 42px; line-height: 50px; letter-spacing: 6px; font-weight: 400; white-space: nowrap; }
.s-right { flex: 1; background: #000; color: #fff; font-size: 57px; line-height: 126px; text-align: center; padding-top: 2px; font-weight: 400; }
.s-body { flex: 1; display: grid; grid-template-columns: 399px 403px 314px; grid-template-rows: 176px 176px; row-gap: 72px; padding: 58px 0 0 82px; }
.s-foot { height: 39px; background: #7b0000; flex: none; }
.s-foot-black { display: block; width: 217px; height: 39px; background: #000; }

/* template cards */
.card { width: 314px; border: 1px solid #555; background: #fff; overflow: hidden; color: #ee3a48; display: flex; flex-direction: column; }
.ct { font-size: 17px; line-height: 22px; color: #e63946; white-space: nowrap; display: block; }
.cs { font-size: 8px; line-height: 11px; color: #ef6a75; white-space: nowrap; display: block; filter: blur(.25px); }
.list, .dlist { color: #ea4e5c; filter: blur(.25px); }
.list p { margin: 0; font-size: 7.750px; line-height: 11.200px; white-space: nowrap; }
.band { display: flex; gap: 2px; flex: none; }
.band i { flex: 1; background: #ed1c24; }
.c1 { border-color: #bbb #444 #444 #bbb; }
.c1-top { height: 53px; display: flex; align-items: center; padding: 0 0 5px 17px; gap: 26px; flex: none; }
.c1-top .cs { margin-top: 5px; }
.c1-band { height: 59px; }
.c1-list { padding: 3px 0 0 105px; }
.c2-band { height: 35px; }
.c2-mid { flex: 1; display: flex; padding: 0 0 0 7px; align-items: center; gap: 14px; }
.c2-mid .list { margin-bottom: 1px; }
.c2-mid .tblock { margin-bottom: 5px; margin-left: -1px; }
.tblock { display: flex; flex-direction: column; align-items: flex-end; gap: 0; flex: none; width: 100px; }
.tblock .cs { margin-top: -1px; }
.c3-band { height: 70px; }
.c3-mid { flex: 1; display: flex; padding: 0 0 0 7px; gap: 13px; align-items: flex-start; }
.c3-mid .tblock { margin-top: 33px; margin-left: -1px; }
.c3-mid .list { margin-top: 28px; margin-left: 1px; }
.card.c4, .card.c5 { flex-direction: row; }
.blocks { display: grid; gap: 2px; flex: none; height: 100%; }
.blocks i { background: #ed1c24; display: block; }
.blocks-2 { width: 137px; grid-template-columns: 64px 71px; grid-template-rows: 59px 53px 60px; }
.blocks-1 { width: 65px; grid-template-rows: 59px 53px 60px; }
.col-text { flex: 1; display: flex; flex-direction: column; padding-top: 13px; }
.c4-text { padding-left: 29px; }
.c5-text { padding-left: 36px; }
.c4-text .cs-gap { margin: 1px 0 0 3px; }
.c5-text .cs-gap { margin: 1px 0 0 1px; }
.dlist { margin: 15px 0 0 4px; display: grid; grid-template-columns: 27.500px 82px; font-size: 7.750px; line-height: 11.700px; }
.dlist dt { margin: 0; white-space: nowrap; }
.dlist dd { margin: 0; }
.c6 { background: linear-gradient(to bottom right, #fff 50%, #ed1c24 50%); }
.c6-title { padding: 36px 0 0 40px; flex: none; display: flex; flex-direction: column; }
.c6-title .cs { margin: 1px 0 0 2px; }
.c6-list { color: #fff; padding: 40px 0 0 118px; opacity: .85; }
.c6-list p { line-height: 13px; }

/* scrollbar */
.vscroll { width: 20px; flex: none; display: flex; flex-direction: column; padding-top: 2px; }
.vbtn { width: 18px; height: 19px; flex: none; background: #fff; border: 1px solid #bcbcbc; display: flex; align-items: center; justify-content: center; }
.vtrack { width: 18px; height: 497px; background: #d8d8d8; flex: none; }
.vthumb { width: 18px; height: 165px; background: #fff; border: 1px solid #b0b0b0; flex: none; }
.vbtn-down { height: 17px; margin-top: 1px; }
.vjump { width: 18px; height: 12px; margin-top: 5px; display: flex; flex-direction: column; align-items: center; gap: 1px; }
.vjump2 { margin-top: 10px; }
.bar { width: 8px; height: 2px; background: #777; display: block; }
.notes { height: 47px; flex: none; border-top: 1px solid #d4d4d4; padding-left: 14px; font-size: 15px; line-height: 36px; color: #666; }
.cursor { position: absolute; left: 942px; top: 6px; width: 16px; height: 23px; }

/* status */
.status { height: 26px; flex: none; background: #f1f1f1; border-top: 1px solid #d0d0d0; display: flex; align-items: center; font-size: 13px; color: #444; padding-left: 10px; }
.st-count { width: 178px; white-space: nowrap; }
.st-book { width: 16px; height: 16px; }
.st-lang { margin-left: 22px; white-space: nowrap; }
.st-right { margin-left: auto; display: flex; align-items: center; height: 100%; }
.st-ic { width: 16px; height: 16px; }
.st-note { margin-left: 5px; font-size: 14px; }
.st-cm { margin-left: 26px; }
.st-comment { margin-left: 3px; margin-right: 24px; font-size: 14px; }
.view { width: 46px; height: 25px; display: flex; align-items: center; justify-content: center; }
.view-on { background: #c6c6c6; }
.zoom-minus { width: 7px; height: 2px; background: #666; margin-left: 7px; }
.slider { width: 120px; height: 1px; background: #999; margin-left: 4px; display: flex; align-items: center; }
.slider-knob { width: 5px; height: 14px; background: #777; margin-left: 61px; flex: none; }
.zoom-plus { margin-left: 4px; font: 16px/16px "Liberation Sans", sans-serif; color: #555; }
.zoom-pct { margin-left: 14px; font-size: 14px; color: #555; }
.st-fit { margin: 0 7px 0 17px; }

/* taskbar */
.taskbar { height: 48px; flex: none; background: #08080f; display: flex; align-items: center; position: relative; padding-left: 0; }
.tslot { width: 58px; height: 48px; display: flex; align-items: center; justify-content: center; flex: none; }
.tk { width: 20px; height: 20px; }
.tk-lg { width: 28px; height: 28px; }
.tslot-fan { width: 60px; }
.tsearch { width: 180px; height: 35px; margin-left: 0; background: #3b3b40; display: flex; align-items: center; padding-left: 4px; flex: none; }
.tk-e { width: 24px; height: 28px; }
.tsearch-text { margin-left: 5px; color: #8a8a90; font-size: 14px; line-height: 20px; white-space: nowrap; }
.tk-mag { width: 20px; height: 20px; margin-left: auto; margin-right: 9px; }
.tk-app { width: 28px; height: 28px; }
.tslot-app { width: 59px; }
.tsa1 { margin-left: 7px; }
.tslot-on { background: #32323a; }
.svgP { font: 700 14px "Liberation Sans", sans-serif; fill: #fff; }
.ubars { position: absolute; left: 485px; bottom: 0; display: flex; gap: 10px; height: 2px; }
.ubars i { width: 49px; background: #76b9ed; display: block; }
.tray { margin-left: auto; display: flex; align-items: center; height: 100%; }
.tr { flex: none; }
.tr-q { width: 17px; height: 18px; }
.tr-people { width: 20px; height: 20px; margin-left: 53px; }
.tr-chev { width: 16px; height: 10px; margin-left: 25px; }
.tr-bt { width: 15px; height: 25px; margin-left: 14px; }
.tr-print { width: 22px; height: 22px; margin-left: 11px; }
.tr-plus { width: 22px; height: 22px; margin-left: 8px; }
.tr-cloud { width: 22px; height: 14px; margin-left: 7px; }
.tr-wifi { width: 20px; height: 20px; margin-left: 9px; }
.tr-vol { width: 20px; height: 20px; margin-left: 6px; }
.tr-ime { color: #fff; font-size: 15px; margin-left: 9px; width: 16px; }
.tr-q2 { width: 18px; height: 18px; margin-left: 18px; }
.clock { width: 100px; margin-left: 10px; display: flex; flex-direction: column; align-items: center; color: #e8e8e8; font-size: 14.500px; line-height: 24px; font-family: "Noto Sans", sans-serif; }
.tr-note { width: 20px; height: 22px; margin-left: 13px; }
.desk { width: 1px; height: 48px; background: #444; margin-left: 23px; margin-right: 5px; }

/* video watermark */
.watermark { position: absolute; left: 1416px; top: 6px; width: 240px; height: 56px; }
.wm-logo { position: absolute; left: 0; top: 14px; width: 79px; height: 40px; }
.wm-text { position: absolute; left: 95px; top: 6px; font-size: 44px; line-height: 52px; color: #fff; white-space: nowrap; font-weight: 500; }
.login { position: absolute; left: 24px; top: 1px; width: 55px; height: 19px; background: #fff; color: #b7472a; font-size: 12px; line-height: 19px; text-align: center; }
```
